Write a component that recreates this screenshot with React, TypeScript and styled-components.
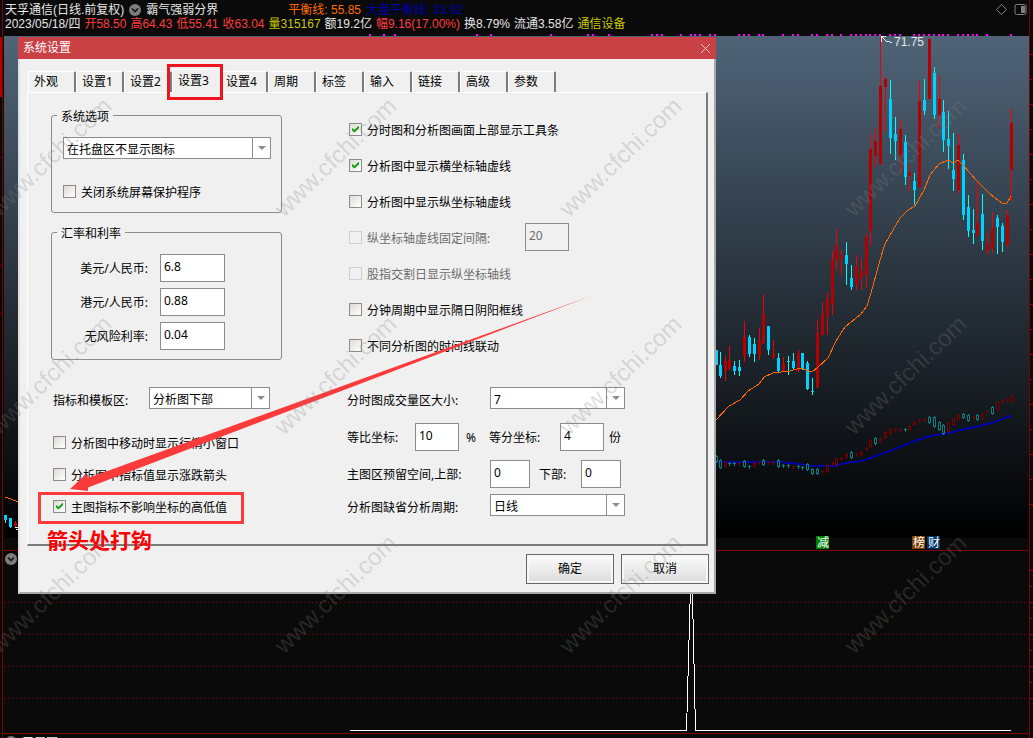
import React, { useId, useState } from "react";
import styled, { createGlobalStyle } from "styled-components";

const uiFont = `"Noto Sans", "Noto Sans CJK SC", sans-serif`;
const quoteFont = `"Liberation Sans", "Noto Sans CJK SC", sans-serif`;

const GlobalStyle = createGlobalStyle`
  *, *::before, *::after { box-sizing: border-box; }
  body { margin: 0; background: #0a0a0a; overflow: hidden; }
`;

/* ---------- trading screen ---------- */

const Screen = styled.div`
  position: relative;
  display: grid;
  grid-template-columns: 2px 1fr 3px;
  min-height: 100vh;
  max-height: 100vh;
  overflow: hidden;
  background: #0a0a0a;
  font: 12px/14px ${quoteFont};
  color: #e6e6e6;
`;

const Scale = styled.svg`
  display: block;
  width: 100%;
  height: 738px;
`;

const Main = styled.main`
  display: flex;
  flex-direction: column;
  min-width: 0;
  border-left: 1px solid #800000;
  border-right: 1px solid #800000;
`;

const QuoteHeader = styled.header`
  display: flex;
  justify-content: space-between;
  flex: none;
  height: 34px;
  padding: 3px 2px 0;
  white-space: nowrap;
`;

const QuoteLine = styled.div<{ $gap: number }>`
  display: flex;
  align-items: center;
  gap: ${(p) => p.$gap}px;
  height: 14px;
`;

const Quote = styled.span<{ $color?: string; $before?: number }>`
  color: ${(p) => p.$color ?? "#e6e6e6"};
  margin-left: ${(p) => p.$before ?? 0}px;
`;

const HeaderTools = styled.div`
  display: flex;
  gap: 6px;
`;

const IconButton = styled.button`
  display: block;
  padding: 0;
  border: 0;
  background: none;
  line-height: 0;
  height: 13px;
`;

const Drawing = styled.svg`
  display: block;
  flex: none;
  width: 100%;
  height: auto;
`;

const IndicatorPane = styled.section`
  border-top: 1px solid #800000;
  border-bottom: 1px solid #800000;
`;

const NextPane = styled.section`
  display: flex;
  gap: 5px;
  height: 4px;
  padding: 2px 2px 0;
  overflow: hidden;
`;

const Watermarks = styled.svg`
  position: absolute;
  inset: 0;
  width: 100%;
  height: 100%;
  pointer-events: none;
`;

/* ---------- dialog ---------- */

const Dialog = styled.form`
  position: absolute;
  left: 18px;
  top: 37px;
  width: 698px;
  font: 12px/16px ${uiFont};
  color: #000;
`;

const TitleBar = styled.div`
  display: flex;
  align-items: center;
  justify-content: space-between;
  height: 22px;
  padding: 0 5px;
  background: #c94045;
  color: #fff;
`;

const DialogBody = styled.div`
  padding: 12px 5px 8px 7px;
  background: #f0f0f0;
  border: 2px solid #a8a8a8;
  border-top: 0;
  border-left: 2px solid #e0e0e0;
`;

const TabList = styled.div`
  display: flex;
  padding-left: 1px;
`;

const Tab = styled.button<{ $active: boolean }>`
  position: relative;
  width: 48px;
  height: ${(p) => (p.$active ? 24 : 21)}px;
  margin: ${(p) => (p.$active ? "-2px 0 -1px" : "0")};
  padding: ${(p) => (p.$active ? "0 0 2px 5px" : "0 0 0 5px")};
  border: 1px solid #fff;
  border-bottom: 0;
  border-right: ${(p) => (p.$active ? "0" : "2px solid #7c7c7c")};
  border-radius: 2px 2px 0 0;
  background: #f0f0f0;
  font: inherit;
  color: inherit;
  text-align: left;
  z-index: ${(p) => (p.$active ? 1 : 0)};
`;

const TabMarker = styled.span`
  position: absolute;
  inset: -6px -3px -7px -6px;
  border: 3px solid #f0141e;
`;

const TabPanel = styled.div`
  display: flex;
  gap: 65px;
  margin-right: 1px;
  padding: 0 0 28px 23px;
  border: 1px solid #fff;
  border-right: 2px solid #7c7c7c;
  border-bottom: 2px solid #7c7c7c;
`;

const LeftColumn = styled.div`
  width: 231px;
  padding-top: 12px;
`;

const RightColumn = styled.div`
  flex: 1;
  padding-top: 18px;
`;

const Group = styled.fieldset<{ $top: number; $bottom: number }>`
  margin: ${(p) => p.$top}px 0 0;
  padding: 12px 10px ${(p) => p.$bottom}px 11px;
  border: 1px solid #8c8c8c;
  border-radius: 3px;
`;

const Legend = styled.legend`
  margin-left: -6px;
  padding: 4px 4px 0;
`;

const Row = styled.div<{ $top?: number; $indent?: number }>`
  display: flex;
  align-items: center;
  margin-top: ${(p) => p.$top ?? 0}px;
  padding-left: ${(p) => p.$indent ?? 0}px;
`;

const Label = styled.label<{ $width?: number; $right?: boolean; $indent?: number; $low?: boolean }>`
  flex: none;
  width: ${(p) => (p.$width ? `${p.$width}px` : "auto")};
  padding: ${(p) => (p.$low ? 5 : 2)}px ${(p) => (p.$right ? 12 : 0)}px 0 ${(p) => p.$indent ?? 0}px;
  text-align: ${(p) => (p.$right ? "right" : "left")};
  white-space: nowrap;
`;

const TextBox = styled.input<{ $width: number }>`
  width: ${(p) => p.$width}px;
  height: 28px;
  padding: 0 3px 4px;
  border: 1px solid #8c8c8c;
  border-radius: 0;
  background: #fff;
  font: inherit;
  color: #000;
  &:disabled { background: #f0f0f0; color: #6d6d6d; }
`;

const SelectFrame = styled.div<{ $width: number }>`
  position: relative;
  flex: none;
  width: ${(p) => p.$width}px;
  height: 22px;
  border: 1px solid #8c8c8c;
  background: #fff;
`;

const SelectInput = styled.select`
  display: block;
  appearance: none;
  width: 100%;
  height: 20px;
  padding: 3px 20px 0 3px;
  border: 0;
  background: none;
  font: inherit;
  color: #000;
`;

const SelectArrow = styled.span`
  position: absolute;
  top: 0;
  right: 0;
  display: flex;
  align-items: center;
  justify-content: center;
  width: 18px;
  height: 20px;
  border-left: 1px solid #8c8c8c;
  pointer-events: none;
  &::before {
    content: "";
    border: 4px solid transparent;
    border-top-color: #8c8c8c;
    border-bottom: 0;
  }
`;

const CheckLabel = styled.label<{ $height: number; $width?: number; $dim?: boolean }>`
  display: flex;
  align-items: center;
  gap: 5px;
  height: ${(p) => p.$height}px;
  width: ${(p) => (p.$width ? `${p.$width}px` : "auto")};
  color: ${(p) => (p.$dim ? "#6d6d6d" : "#000")};
  white-space: nowrap;
`;

const CheckText = styled.span`
  padding-top: 3px;
`;

const CheckBox = styled.input`
  appearance: none;
  flex: none;
  width: 13px;
  height: 13px;
  margin: 0;
  border: 1px solid #8c8c8c;
  background: linear-gradient(135deg, #dedbd4, #fff);
  &:disabled { border-color: #cfcfcf; background: #f0f0f0; }
  &:checked::before {
    content: "";
    display: block;
    width: 7px;
    height: 7px;
    margin: 2px;
    background: #17a017;
    clip-path: polygon(0 35%, 36% 62%, 100% 0, 100% 38%, 36% 100%, 0 72%);
  }
`;

const Actions = styled.div`
  display: flex;
  justify-content: flex-end;
  gap: 7px;
  margin-top: 8px;
`;

const PushButton = styled.button`
  width: 88px;
  height: 30px;
  padding: 0;
  border: 1px solid #666;
  border-radius: 0;
  box-shadow: inset 0 0 0 2px #f7f7f7;
  background: linear-gradient(#fbfbfb, #dcdcdc);
  font: inherit;
  color: #000;
`;

const Notes = styled.svg`
  position: absolute;
  left: 0;
  top: 0;
  width: 698px;
  height: 557px;
  pointer-events: none;
`;

/* ---------- chart data ---------- */

type Candle = [x: number, high: number, top: number, bottom: number, low: number, up: 0 | 1];

const candles: Candle[] = [
  [716, 350, 350, 365, 365, 0], [720, 352, 365, 376, 378, 0], [725, 357, 361, 371, 381, 1],
  [729, 346, 360, 369, 370, 1], [734, 361, 366, 371, 375, 0], [739, 360, 367, 371, 376, 0],
  [744, 321, 337, 356, 362, 1], [749, 335, 337, 354, 357, 0], [754, 338, 344, 354, 362, 0],
  [759, 328, 341, 355, 360, 1], [763, 294, 314, 343, 344, 1], [768, 326, 326, 350, 355, 0],
  [773, 340, 354, 357, 359, 1], [778, 353, 358, 371, 372, 0], [783, 357, 363, 371, 372, 1],
  [788, 356, 361, 362, 375, 0], [793, 353, 361, 368, 369, 0], [798, 350, 353, 371, 372, 1],
  [802, 353, 353, 369, 370, 0], [807, 361, 363, 389, 390, 0], [812, 378, 391, 392, 395, 0],
  [817, 320, 333, 387, 388, 1], [822, 302, 314, 335, 335, 1], [827, 293, 299, 316, 335, 1],
  [832, 251, 260, 305, 315, 1], [836, 229, 246, 260, 270, 1], [841, 250, 255, 259, 275, 1],
  [846, 242, 255, 264, 285, 0], [851, 265, 278, 287, 290, 0], [856, 255, 266, 285, 290, 1],
  [861, 259, 271, 278, 290, 1], [866, 233, 237, 275, 288, 1], [870, 134, 149, 231, 246, 1],
  [875, 128, 141, 156, 168, 1], [880, 37, 86, 164, 165, 1], [885, 77, 79, 87, 132, 1],
  [890, 80, 99, 138, 154, 0], [895, 117, 134, 141, 160, 0], [900, 119, 129, 155, 174, 1],
  [905, 135, 142, 177, 185, 0], [909, 164, 172, 176, 191, 1], [914, 173, 181, 190, 205, 0],
  [919, 81, 101, 187, 187, 1], [924, 79, 100, 111, 115, 0], [929, 38, 39, 99, 99, 1],
  [934, 67, 73, 115, 119, 0], [939, 75, 99, 115, 128, 1], [943, 100, 112, 140, 152, 0],
  [948, 111, 139, 146, 169, 0], [953, 133, 170, 179, 191, 0], [958, 134, 145, 190, 193, 1],
  [963, 154, 160, 215, 220, 0], [968, 195, 207, 231, 237, 0], [973, 209, 230, 233, 244, 0],
  [977, 182, 223, 236, 236, 1], [982, 194, 214, 241, 250, 0], [987, 232, 244, 250, 255, 1],
  [992, 212, 228, 249, 253, 1], [997, 215, 218, 227, 254, 0], [1002, 223, 226, 242, 252, 0],
  [1007, 210, 215, 245, 247, 1], [1011, 109, 123, 170, 201, 1],
  [5, 515, 515, 520, 523, 0], [10, 518, 518, 527, 528, 0], [15, 521, 523, 526, 528, 1],
];

type IndexBar = [x: number, top: number, bottom: number, up: 0 | 1];

/* Bars of the market index; equal top and bottom means a flat day. */
const indexBars: IndexBar[] = [
  [716, 456, 461, 0], [720, 460, 467, 0], [725, 462, 466, 1], [729, 463, 463, 0], [734, 463, 463, 0],
  [739, 463, 463, 1], [744, 461, 466, 0], [749, 466, 466, 0], [754, 463, 466, 1], [759, 462, 462, 1],
  [763, 460, 464, 0], [768, 462, 462, 1], [773, 462, 462, 1], [778, 460, 466, 0], [783, 465, 465, 0],
  [788, 465, 465, 0], [793, 466, 466, 1], [798, 466, 466, 0], [802, 467, 467, 0], [807, 464, 469, 0],
  [812, 469, 473, 0], [817, 469, 473, 0], [822, 471, 471, 1], [827, 465, 471, 1], [832, 463, 463, 1],
  [836, 459, 464, 1], [841, 458, 458, 1], [846, 454, 457, 1], [851, 452, 457, 0], [856, 454, 454, 1],
  [861, 452, 454, 1], [866, 448, 448, 1], [870, 440, 446, 1], [875, 438, 443, 0], [880, 439, 441, 1],
  [885, 432, 437, 1], [890, 429, 433, 1], [895, 429, 429, 1], [900, 429, 429, 1], [905, 429, 429, 0],
  [909, 426, 429, 1], [914, 422, 424, 1], [919, 420, 420, 1], [924, 419, 419, 1], [929, 417, 422, 0],
  [934, 417, 426, 0], [939, 422, 429, 0], [943, 425, 433, 0], [948, 423, 431, 1], [953, 419, 424, 1],
  [958, 415, 418, 1], [963, 414, 417, 0], [968, 415, 420, 0], [973, 417, 417, 1], [977, 415, 419, 0],
  [982, 414, 418, 1], [987, 411, 411, 1], [992, 407, 413, 0], [997, 402, 409, 1], [1002, 401, 401, 1],
  [1007, 399, 399, 1], [1011, 396, 401, 1],
];

const signalDots = [
  369, 383, 394, 476, 490, 550, 587, 592, 608, 651, 656, 661, 680, 690, 694, 699, 709, 714, 738, 743,
  748, 758, 762, 782, 792, 797, 811, 816, 826, 831, 840, 850, 855, 860, 865, 869, 874, 879, 889, 894,
  899, 913, 918, 923, 928, 933, 938, 942, 947, 957, 962, 967, 972, 976, 986, 1010,
];

const balanceLine =
  "716,420 729,406 740,400 748,391 759,384 764,377 773,373 790,371 800,368 806,370 812,372 818,367 828,358 836,341 845,327 861,314 867,306 873,286 880,260 885,244 900,218 908,210 915,206 924,190 930,175 939,164 948,160 953,163 958,160 963,165 977,181 990,194 1002,203 1007,203 1011,196";

const indexLine =
  "716,462 780,462 800,464 812,466 835,466 845,463 862,461 873,457 890,451 915,441 930,436 950,433 960,430 980,426 995,422 1007,417 1012,416";

const tags = [
  { x: 816, text: "减", color: "#008000" },
  { x: 912, text: "榜", color: "#804000" },
  { x: 927, text: "财", color: "#003468" },
];

/* ---------- parts ---------- */

const RoundChevron = () => (
  <svg width="12" height="12" viewBox="0 0 12 12" aria-hidden="true">
    <circle cx="6" cy="6" r="6" fill="#7d7d7d" />
    <path d="M3 4.5 6 7.5 9 4.5" fill="none" stroke="#151515" strokeWidth="1.6" />
  </svg>
);

const PriceChart = () => (
  <Drawing viewBox="3 34 1026 516" shapeRendering="crispEdges" aria-label="日线图">
    <defs>
      <linearGradient id="plotFill" x1="0" y1="0" x2="0" y2="1">
        <stop offset="0" stopColor="#506478" />
        <stop offset="1" stopColor="#000" />
      </linearGradient>
    </defs>
    <rect x="4" y="36" width="1025" height="502" fill="url(#plotFill)" />
    {signalDots.map((x) => (
      <rect key={x} x={x} y="34" width="2" height="2" fill="#f0f" />
    ))}
    <polyline points={indexLine} fill="none" stroke="#0000a8" strokeWidth="2" />
    {indexBars.map(([x, top, bottom, up]) => {
      const color = up ? "#780000" : "#008080";
      return top === bottom ? (
        <path key={x} d={`M${x - 1} ${top + 0.5}h3M${x + 0.5} ${top - 1}v4`} stroke={color} />
      ) : (
        <g key={x}>
          <rect x={x} y={top - 1} width="1" height={bottom - top + 3} fill={color} />
          <rect x={x - 0.5} y={top + 0.5} width="2" height={bottom - top} fill="#0a0d10" stroke={color} />
        </g>
      );
    })}
    {candles.map(([x, high, top, bottom, low, up]) => (
      <g key={x}>
        <rect x={x} y={high} width="1" height={Math.max(low - high, 1)} fill={up ? "#f00000" : "#00ffff"} />
        <rect x={x - 1} y={top} width="3" height={bottom - top} fill={up ? "#b40000" : "#00d2ff"} />
      </g>
    ))}
    <polyline points={balanceLine} fill="none" stroke="#ff6a00" />
    <polyline points="5,497 11,499 18,502" fill="none" stroke="#ff6a00" />
    <path d="M881.5 42v-5.500h4M882 37l4 4 6 1.500M15 527h3M16 529h3" fill="none" stroke="#f0f0f0" />
    <text x="894" y="46" fill="#e6e6e6" fontSize="12">71.75</text>
    {tags.map((tag) => (
      <g key={tag.text}>
        <rect x={tag.x} y="536" width="13" height="13" fill={tag.color} />
        <text x={tag.x + 1} y="547" fill="#fff" fontSize="12">{tag.text}</text>
      </g>
    ))}
  </Drawing>
);

const IndicatorChart = () => (
  <Drawing viewBox="3 551 1026 182" shapeRendering="crispEdges" aria-label="霸气强弱分界">
    {[602, 634, 666, 698].map((y) => (
      <path key={y} d={`M4 ${y + 0.5}H1028`} stroke="#a00000" strokeDasharray="1 3" />
    ))}
    <polyline points="350,730.5 686.5,730.5 691.5,551 695.5,730.5 1011,730.5" fill="none" stroke="#fff" />
    <g shapeRendering="auto">
      <circle cx="11" cy="559" r="6" fill="#7d7d7d" />
      <path d="M8 557.500 11 560.500 14 557.500" fill="none" stroke="#151515" strokeWidth="1.6" />
    </g>
  </Drawing>
);

const LeftScale = () => (
  <Scale shapeRendering="crispEdges" aria-hidden="true">
    <rect y="37" width="2" height="60" fill="#b00000" />
    {[157, 265, 313].map((y) => (
      <rect key={y} y={y} width="2" height="1" fill="#800000" />
    ))}
  </Scale>
);

const RightScale = () => (
  <Scale shapeRendering="crispEdges" aria-hidden="true">
    {Array.from({ length: 19 }, (_, i) => (
      <rect key={i} y={54 + i * 25} width={i % 2 ? 2 : 3} height="1" fill="#a00000" />
    ))}
    {Array.from({ length: 9 }, (_, i) => (
      <rect key={i} y={570 + i * 16} width={i % 2 ? 2 : 3} height="1" fill="#a00000" />
    ))}
  </Scale>
);

function Check(props: { text: string; on?: boolean; disabled?: boolean; height?: number; width?: number }) {
  return (
    <CheckLabel $height={props.height ?? 16} $width={props.width} $dim={props.disabled}>
      <CheckBox type="checkbox" defaultChecked={props.on} disabled={props.disabled} />
      <CheckText>{props.text}</CheckText>
    </CheckLabel>
  );
}

function Select(props: { id?: string; label?: string; width: number; value: string }) {
  return (
    <SelectFrame $width={props.width}>
      <SelectInput id={props.id} aria-label={props.label} defaultValue={props.value}>
        <option>{props.value}</option>
      </SelectInput>
      <SelectArrow />
    </SelectFrame>
  );
}

function Field(props: {
  label: string;
  labelWidth: number;
  labelIndent?: number;
  right?: boolean;
  value: string;
  width: number;
  select?: boolean;
}) {
  const id = useId();
  return (
    <>
      <Label
        htmlFor={id}
        $width={props.labelWidth}
        $right={props.right}
        $indent={props.labelIndent}
        $low={props.select}
      >
        {props.label}
      </Label>
      {props.select ? (
        <Select id={id} width={props.width} value={props.value} />
      ) : (
        <TextBox id={id} $width={props.width} defaultValue={props.value} />
      )}
    </>
  );
}

const tabNames = ["外观", "设置1", "设置2", "设置3", "设置4", "周期", "标签", "输入", "链接", "高级", "参数"];

function SettingsDialog() {
  const [active, setActive] = useState(3);
  return (
    <Dialog role="dialog" aria-label="系统设置" onSubmit={(e) => e.preventDefault()}>
      <TitleBar>
        系统设置
        <IconButton type="button" aria-label="关闭">
          <svg width="11" height="11" viewBox="0 0 11 11">
            <path d="M1 1 10 10M10 1 1 10" stroke="#f0c4c5" />
          </svg>
        </IconButton>
      </TitleBar>
      <DialogBody>
        <TabList role="tablist">
          {tabNames.map((name, i) => (
            <Tab
              key={name}
              type="button"
              role="tab"
              aria-selected={i === active}
              $active={i === active}
              onClick={() => setActive(i)}
            >
              {name}
              {i === 3 && <TabMarker />}
            </Tab>
          ))}
        </TabList>
        <TabPanel role="tabpanel">
          <LeftColumn>
            <Group $top={0} $bottom={13}>
              <Legend>系统选项</Legend>
              <Select label="系统选项" width={208} value="在托盘区不显示图标" />
              <Row $top={24}>
                <Check text="关闭系统屏幕保护程序" />
              </Row>
            </Group>
            <Group $top={9} $bottom={9}>
              <Legend>汇率和利率</Legend>
              <Row>
                <Field label="美元/人民币:" labelWidth={97} right value="6.8" width={65} />
              </Row>
              <Row $top={6}>
                <Field label="港元/人民币:" labelWidth={97} right value="0.88" width={65} />
              </Row>
              <Row $top={6}>
                <Field label="无风险利率:" labelWidth={97} right value="0.04" width={65} />
              </Row>
            </Group>
            <Row $top={27} $indent={2}>
              <Field label="指标和模板区:" labelWidth={96} value="分析图下部" width={121} select />
            </Row>
            <Row $top={25} $indent={2}>
              <Check text="分析图中移动时显示行情小窗口" />
            </Row>
            <Row $top={16} $indent={2}>
              <Check text="分析图中指标值显示涨跌箭头" />
            </Row>
            <Row $top={16} $indent={2}>
              <Check text="主图指标不影响坐标的高低值" on />
            </Row>
          </LeftColumn>
          <RightColumn>
            <Row $indent={2}>
              <Check height={36} text="分时图和分析图画面上部显示工具条" on />
            </Row>
            <Row $indent={2}>
              <Check height={36} text="分析图中显示横坐标轴虚线" on />
            </Row>
            <Row $indent={2}>
              <Check height={36} text="分析图中显示纵坐标轴虚线" />
            </Row>
            <Row $indent={2}>
              <Check height={36} width={176} text="纵坐标轴虚线固定间隔:" disabled />
              <TextBox $width={44} aria-label="纵坐标轴虚线固定间隔" defaultValue="20" disabled />
            </Row>
            <Row $indent={2}>
              <Check height={36} text="股指交割日显示纵坐标轴线" disabled />
            </Row>
            <Row $indent={2}>
              <Check height={36} text="分钟周期中显示隔日阴阳框线" />
            </Row>
            <Row $indent={2}>
              <Check height={36} text="不同分析图的时间线联动" />
            </Row>
            <Row $top={24}>
              <Field label="分时图成交量区大小:" labelWidth={143} value="7" width={135} select />
            </Row>
            <Row $top={14}>
              <Field label="等比坐标:" labelWidth={68} value="10" width={44} />
              <Label as="span" $width={30} $indent={7}>%</Label>
              <Field label="等分坐标:" labelWidth={71} value="4" width={44} />
              <Label as="span" $indent={5}>份</Label>
            </Row>
            <Row $top={9}>
              <Field label="主图区预留空间,上部:" labelWidth={143} value="0" width={40} />
              <Field label="下部:" labelWidth={51} labelIndent={9} value="0" width={40} />
            </Row>
            <Row $top={6}>
              <Field label="分析图缺省分析周期:" labelWidth={143} value="日线" width={135} select />
            </Row>
          </RightColumn>
        </TabPanel>
        <Actions>
          <PushButton type="submit">确定</PushButton>
          <PushButton type="button">取消</PushButton>
        </Actions>
      </DialogBody>
      <Notes viewBox="18 37 698 557">
        <rect x="39.5" y="493.5" width="203" height="29" fill="none" stroke="#fb3b3b" strokeWidth="3" />
        <path d="M70 489 86 474 88 478 591 296 88 487.500 88 491Z" fill="#fb3b3b" />
        <text x="47" y="548" fill="#f00" fontSize="21" fontWeight="700">箭头处打钩</text>
      </Notes>
    </Dialog>
  );
}

export default function App() {
  return (
    <>
      <GlobalStyle />
      <Screen>
        <LeftScale />
        <Main>
          <QuoteHeader>
            <div>
              <QuoteLine $gap={5}>
                <Quote>天孚通信(日线.前复权)</Quote>
                <RoundChevron />
                <Quote>霸气强弱分界</Quote>
                <Quote $color="#ff6a00" $before={65}>平衡线: 55.85</Quote>
                <Quote $color="#0000a8">大盘平衡线: 33.92</Quote>
              </QuoteLine>
              <QuoteLine $gap={4}>
                <Quote>2023/05/18/四</Quote>
                <Quote $color="#ff3c3c">开58.50</Quote>
                <Quote $color="#ff3c3c">高64.43</Quote>
                <Quote $color="#ff3c3c">低55.41</Quote>
                <Quote $color="#ff3c3c">收63.04</Quote>
                <Quote $color="#c8c800">量315167</Quote>
                <Quote>额19.2亿</Quote>
                <Quote $color="#ff3c3c">幅9.16(17.00%)</Quote>
                <Quote>换8.79%</Quote>
                <Quote>流通3.58亿</Quote>
                <Quote $color="#c8c800">通信设备</Quote>
              </QuoteLine>
            </div>
            <HeaderTools>
              <IconButton type="button" aria-label="标记">
                <svg width="13" height="13" viewBox="0 0 13 13">
                  <path d="M6.500 1.500 11.500 6.500 6.500 11.500 1.500 6.500Z" fill="none" stroke="#808080" />
                </svg>
              </IconButton>
              <IconButton type="button" aria-label="侧栏">
                <svg width="13" height="13" viewBox="0 0 13 13">
                  <rect x="1" y="1.500" width="11" height="10" rx="1.500" fill="none" stroke="#808080" />
                  <rect x="7" y="3" width="4" height="7" fill="#808080" />
                </svg>
              </IconButton>
            </HeaderTools>
          </QuoteHeader>
          <PriceChart />
          <IndicatorPane>
            <IndicatorChart />
          </IndicatorPane>
          <NextPane>
            <RoundChevron />
            <Quote>三周图</Quote>
          </NextPane>
        </Main>
        <RightScale />
        <SettingsDialog />
        <Watermarks aria-hidden="true">
          {[218, 436, 655].map((y) =>
            [-1, 284, 569, 854].map((x) => (
              <text
                key={`${x}-${y}`}
                transform={`translate(${x} ${y}) rotate(-44)`}
                fill="#808080"
                fillOpacity="0.26"
                fontSize="24"
              >
                www.cfchi.com
              </text>
            )),
          )}
        </Watermarks>
      </Screen>
    </>
  );
}
